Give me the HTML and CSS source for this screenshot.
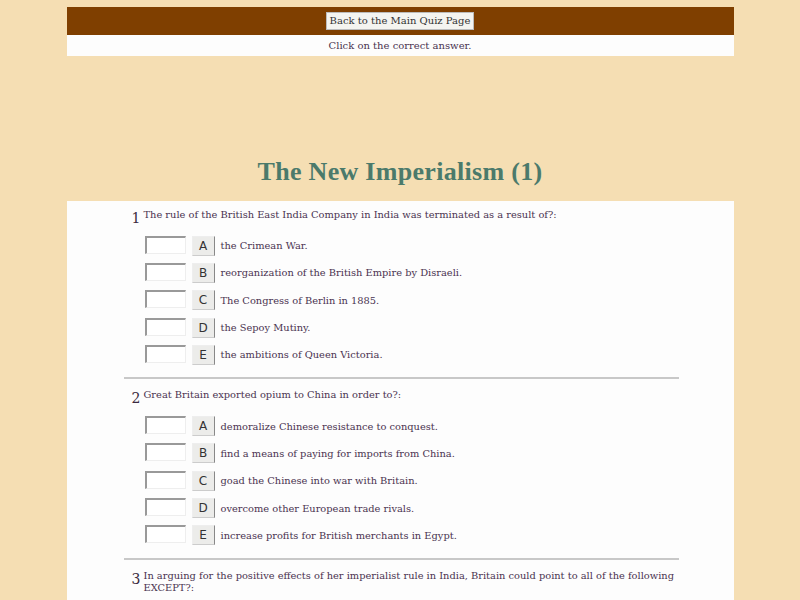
FILE: index.html
```html
<!DOCTYPE html>
<html>
<head>
<meta charset="utf-8">
<link rel="stylesheet" href="styles.css">
</head>
<body>
<div class="page">
  <div class="topbar"><button class="back">Back to the Main Quiz Page</button></div>
  <div class="instr">Click on the correct answer.</div>
  <h1 class="title">The New Imperialism (1)</h1>
  <div class="panel">
    <div class="inner">
      <div class="q">
        <div class="qhead"><span class="num">1</span><span class="qtext">The rule of the British East India Company in India was terminated as a result of?:</span></div>
        <div class="ans"><span class="box"></span><span class="btn">A</span><span class="atext">the Crimean War.</span></div>
        <div class="ans"><span class="box"></span><span class="btn">B</span><span class="atext">reorganization of the British Empire by Disraeli.</span></div>
        <div class="ans"><span class="box"></span><span class="btn">C</span><span class="atext">The Congress of Berlin in 1885.</span></div>
        <div class="ans"><span class="box"></span><span class="btn">D</span><span class="atext">the Sepoy Mutiny.</span></div>
        <div class="ans"><span class="box"></span><span class="btn">E</span><span class="atext">the ambitions of Queen Victoria.</span></div>
      </div>
      <div class="q">
        <div class="qhead"><span class="num">2</span><span class="qtext">Great Britain exported opium to China in order to?:</span></div>
        <div class="ans"><span class="box"></span><span class="btn">A</span><span class="atext">demoralize Chinese resistance to conquest.</span></div>
        <div class="ans"><span class="box"></span><span class="btn">B</span><span class="atext">find a means of paying for imports from China.</span></div>
        <div class="ans"><span class="box"></span><span class="btn">C</span><span class="atext">goad the Chinese into war with Britain.</span></div>
        <div class="ans"><span class="box"></span><span class="btn">D</span><span class="atext">overcome other European trade rivals.</span></div>
        <div class="ans"><span class="box"></span><span class="btn">E</span><span class="atext">increase profits for British merchants in Egypt.</span></div>
      </div>
      <div class="q">
        <div class="qhead"><span class="num">3</span><span class="qtext">In arguing for the positive effects of her imperialist rule in India, Britain could point to all of the following EXCEPT?:</span></div>
      </div>
    </div>
  </div>
</div>
</body>
</html>
```
FILE: styles.css
```css
html, body {
  margin: 0;
  padding: 0;
  background: #f5deb3;
}
body {
  font-family: "DejaVu Serif", serif;
  color: #4a3350;
}
.page {
  width: 667px;
  margin: 0 auto;
  padding-top: 7px;
}
.topbar {
  background: #7f3f00;
  height: 28px;
  display: flex;
  align-items: center;
  justify-content: center;
}
.back {
  font-family: "DejaVu Serif", serif;
  font-size: 10px;
  color: #333;
  background: #f4f4f0;
  border: 1px solid #bbb;
  padding: 2px 3px;
  height: 18px;
  line-height: 12px;
}
.instr {
  background: #fdfdfd;
  height: 21px;
  line-height: 21px;
  text-align: center;
  font-size: 10px;
}
.title {
  margin: 0;
  padding-top: 101px;
  height: 44px;
  text-align: center;
  font-family: "Liberation Serif", serif;
  font-weight: bold;
  font-size: 26px;
  color: #4b7a6b;
  line-height: 30px;
  letter-spacing: 0.3px;
}
.panel {
  background: #fdfdfd;
  min-height: 420px;
  padding-top: 7px;
}
.inner {
  width: 555px;
  margin-left: 57px;
}
.q {
  border-bottom: 2px solid #c8c8c8;
  padding-bottom: 9px;
  margin-bottom: 9px;
}
.q:last-child {
  border-bottom: none;
}
.qhead {
  display: flex;
  align-items: flex-start;
  padding-left: 8px;
  margin-bottom: 7px;
}
.num {
  font-size: 14px;
  line-height: 14px;
  width: 12px;
  flex: none;
  padding-top: 3px;
  color: #3a2a40;
}
.qtext {
  font-size: 9.85px;
  line-height: 12px;
  padding-top: 1px;
}
.ans {
  display: flex;
  align-items: center;
  height: 27.3px;
  padding-left: 21px;
}
.box {
  width: 38px;
  height: 15px;
  background: #fff;
  border-top: 2px solid #999;
  border-left: 2px solid #999;
  border-bottom: 1px solid #eee;
  border-right: 1px solid #eee;
  margin-right: 6px;
  position: relative;
  top: -1px;
}
.btn {
  width: 23px;
  height: 20px;
  box-sizing: border-box;
  background: #ececea;
  border-top: 1px solid #eee;
  border-left: 1px solid #eee;
  border-right: 1px solid #888;
  border-bottom: 1px solid #ccc;
  font-family: "DejaVu Sans", sans-serif;
  font-size: 12px;
  color: #333;
  display: flex;
  align-items: center;
  justify-content: center;
  margin-right: 6px;
}
.atext {
  font-size: 9.85px;
}
```
